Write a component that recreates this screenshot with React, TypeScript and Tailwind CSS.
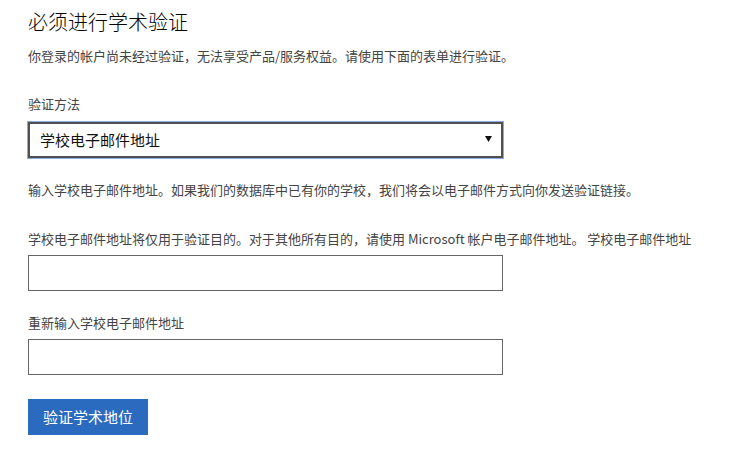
import React from "react";

export default function App() {
  const font = { fontFamily: '"Noto Sans CJK SC", "Noto Sans", sans-serif' };
  return (
    <div className="w-[746px] h-[466px] bg-white overflow-hidden" style={font}>
      <div className="flex flex-col pl-[28px]">
        <h1 className="mt-[8px] text-[20px] leading-[28px] text-black font-light">必须进行学术验证</h1>
        <p className="mt-[10px] text-[13px] leading-[20px] text-[#444]">
          你登录的帐户尚未经过验证，无法享受产品/服务权益。请使用下面的表单进行验证。
        </p>
        <label className="mt-[28px] text-[13px] leading-[20px] text-[#444]">验证方法</label>
        <div className="mt-[8px] w-[475px] h-[36px] border-2 border-[#505050] ring-1 ring-[#8aaae6] flex items-center justify-between pl-[10px] pr-[9px]">
          <span className="text-[15px] leading-[20px] text-[#111]">学校电子邮件地址</span>
          <svg width="7" height="6" viewBox="0 0 7 6" className="mb-[2px]">
            <polygon points="0,0 7,0 3.5,6" fill="#111" />
          </svg>
        </div>
        <p className="mt-[22px] text-[13px] leading-[20px] text-[#444]">
          输入学校电子邮件地址。如果我们的数据库中已有你的学校，我们将会以电子邮件方式向你发送验证链接。
        </p>
        <p className="mt-[29px] text-[13px] leading-[20px] text-[#444]">
          学校电子邮件地址将仅用于验证目的。对于其他所有目的，请使用 Microsoft 帐户电子邮件地址。 学校电子邮件地址
        </p>
        <div className="mt-[6px] w-[475px] h-[36px] border border-[#666]" />
        <label className="mt-[22px] text-[13px] leading-[20px] text-[#444]">重新输入学校电子邮件地址</label>
        <div className="mt-[6px] w-[475px] h-[36px] border border-[#666]" />
        <button className="mt-[24px] w-[120px] h-[36px] bg-[#2a6bbf] text-white text-[15px] leading-[20px] flex items-center justify-center">
          验证学术地位
        </button>
      </div>
    </div>
  );
}
